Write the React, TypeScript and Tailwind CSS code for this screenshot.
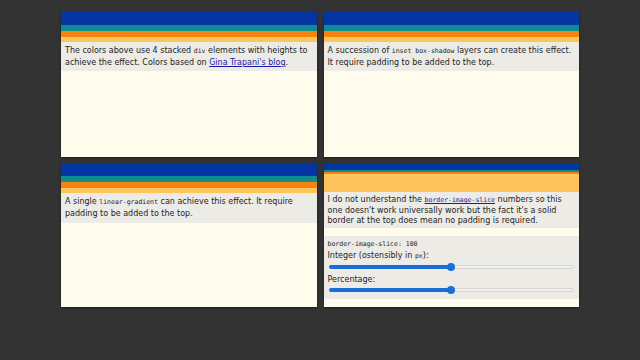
export default function App() {
  const font = { fontFamily: '"DejaVu Sans", Verdana, sans-serif' };
  const code = "font-['DejaVu_Sans_Mono',monospace] text-[6.5px]";

  const Stripes = ({ h }: { h: number[] }) => (
    <div className="flex flex-col">
      <div className="bg-[#0436a3]" style={{ height: h[0] }} />
      <div className="bg-[#108c8c]" style={{ height: h[1] }} />
      <div className="bg-[#f58412]" style={{ height: h[2] }} />
      <div className="bg-[#fec55c]" style={{ height: h[3] }} />
    </div>
  );

  const Slider = () => (
    <div className="relative h-[8px] mx-[1px] flex items-center">
      <div className="w-full h-[4px] rounded-full bg-[#efefef] border border-[#d5d5d5]" />
      <div className="absolute left-0 w-1/2 h-[4px] rounded-full bg-[#1a6fd6]" />
      <div className="absolute left-[calc(50%-4px)] w-[8px] h-[8px] rounded-full bg-[#1a6fd6]" />
    </div>
  );

  return (
    <div className="w-[640px] h-[360px] bg-[#333333] pt-[12px] text-[8px] leading-[11px] text-[#1e1e1e]" style={font}>
      <div className="mx-auto w-[518px] grid grid-cols-2 gap-[7px]">
        <div className="h-[145px] overflow-hidden bg-[#fffcee] shadow-[0_1px_2px_rgba(0,0,0,0.5)]">
          <Stripes h={[13, 6, 6, 5]} />
          <div className="bg-[#ecebe6] px-[4px] pt-[3px] pb-[3px]">
            The colors above use 4 stacked <span className={code}>div</span> elements with heights to achieve the effect. Colors based on{' '}
            <span className="text-[#1a1aa6] underline">Gina Trapani's blog</span>.
          </div>
        </div>
        <div className="h-[145px] overflow-hidden bg-[#fffcee] shadow-[0_1px_2px_rgba(0,0,0,0.5)]">
          <Stripes h={[13, 6, 6, 5]} />
          <div className="bg-[#ecebe6] px-[4px] pt-[3px] pb-[3px]">
            A succession of <span className={code}>inset box-shadow</span> layers can create this effect. It require padding to be added to the top.
          </div>
        </div>
        <div className="h-[143px] overflow-hidden bg-[#fffcee] shadow-[0_1px_2px_rgba(0,0,0,0.5)]">
          <Stripes h={[12, 6, 6, 5]} />
          <div className="bg-[#ecebe6] px-[4px] pt-[3px] pb-[4px]">
            A single <span className={code}>linear-gradient</span> can achieve this effect. It require padding to be added to the top.
          </div>
        </div>
        <div className="h-[143px] overflow-hidden bg-[#fffcee] shadow-[0_1px_2px_rgba(0,0,0,0.5)]">
          <Stripes h={[6, 2, 2, 18]} />
          <div className="bg-[#ecebe6] px-[4px] pt-[3px] pb-[1px] leading-[10.5px]">
            I do not understand the <span className={`${code} text-[#1a1aa6] underline`}>border-image-slice</span> numbers so this one doesn't work universally work but the fact it's a solid border at the top does mean no padding is required.
          </div>
          <div className="mt-[8px] bg-[#ecebe6] px-[4px] pt-[4px] pb-[5px] flex flex-col">
            <div className={`${code} leading-[9px]`}>border-image-slice: 100</div>
            <div className="leading-[11px] mt-[1px]">
              Integer (ostensibly in <span className={code}>px</span>):
            </div>
            <div className="mt-[1px]">
              <Slider />
            </div>
            <div className="mt-[3px] leading-[11px]">Percentage:</div>
            <div className="mt-[1px]">
              <Slider />
            </div>
          </div>
        </div>
      </div>
    </div>
  );
}
